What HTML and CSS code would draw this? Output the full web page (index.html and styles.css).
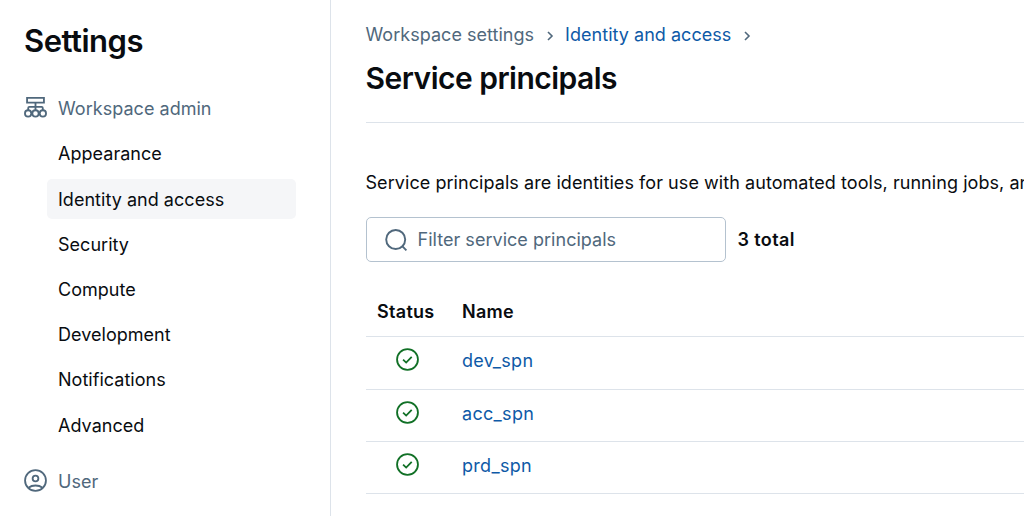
FILE: index.html
```html
<!DOCTYPE html>
<html lang="en">

<head>
    <meta charset="utf-8">
    <meta name="viewport" content="width=device-width">
    <title>Settings</title>
    <link rel="stylesheet" href="styles.css">
</head>

<body>
    <div class="page">
        <aside class="sidebar">
            <h1 class="sidebar-title">Settings</h1>
            <div class="group group-admin">
                <svg class="icon" viewBox="0 0 24 24">
                    <path d="M3.2 2h17.6v5H3.2zM12 7v8M4.4 14.6v-2q0-1.2 1.2-1.2h12.8q1.2 0 1.2 1.2v2" />
                    <circle cx="4.3" cy="18.2" r="3.3" />
                    <circle cx="12" cy="18.2" r="3.3" />
                    <circle cx="19.7" cy="18.2" r="3.3" />
                </svg>
                <span>Workspace admin</span>
            </div>
            <nav class="menu">
                <a class="item">Appearance</a>
                <a class="item on">Identity and access</a>
                <a class="item">Security</a>
                <a class="item">Compute</a>
                <a class="item">Development</a>
                <a class="item">Notifications</a>
                <a class="item">Advanced</a>
            </nav>
            <div class="group group-user">
                <svg class="icon" viewBox="0 0 24 24">
                    <circle cx="12" cy="12" r="10.9" />
                    <circle cx="12" cy="9.9" r="3" />
                    <path d="M4.6 19.6c4.2-3.2 10.6-3.2 14.8 0" />
                </svg>
                <span>User</span>
            </div>
        </aside>
        <main class="main">
            <div class="crumbs">
                <span class="crumb">Workspace settings</span>
                <svg class="chevron" viewBox="0 0 8 12"><path d="M2 2l4 4-4 4" /></svg>
                <a class="crumb link">Identity and access</a>
                <svg class="chevron" viewBox="0 0 8 12"><path d="M2 2l4 4-4 4" /></svg>
            </div>
            <h2 class="title">Service principals</h2>
            <p class="desc">Service principals are identities for use with automated tools, running jobs, and</p>
            <div class="toolbar">
                <div class="search">
                    <svg class="search-icon" viewBox="0 0 24 24">
                        <circle cx="11.7" cy="11.5" r="9.5" />
                        <path d="M18.2 18.2l4.2 4.2" />
                    </svg>
                    <span class="placeholder">Filter service principals</span>
                </div>
                <span class="total">3 total</span>
            </div>
            <div class="table">
                <div class="row head">
                    <span>Status</span>
                    <span>Name</span>
                </div>
                <div class="row">
                    <svg class="check" viewBox="0 0 24 24"><circle cx="12" cy="12" r="10.9" /><path d="M7.4 12.2l3.2 3 5.8-5.9" /></svg>
                    <a class="name link">dev_spn</a>
                </div>
                <div class="row">
                    <svg class="check" viewBox="0 0 24 24"><circle cx="12" cy="12" r="10.9" /><path d="M7.4 12.2l3.2 3 5.8-5.9" /></svg>
                    <a class="name link">acc_spn</a>
                </div>
                <div class="row">
                    <svg class="check" viewBox="0 0 24 24"><circle cx="12" cy="12" r="10.9" /><path d="M7.4 12.2l3.2 3 5.8-5.9" /></svg>
                    <a class="name link">prd_spn</a>
                </div>
            </div>
        </main>
    </div>
</body>

</html>
```
FILE: styles.css
```css
* {
    box-sizing: border-box;
}

body {
    margin: 0;
    background: #fff;
    color: #090c10;
    font-family: Inter, "Liberation Sans", sans-serif;
    font-size: 18px;
    line-height: 26px;
    letter-spacing: 0.03px;
    overflow: hidden;
}

svg {
    display: block;
    flex: none;
    fill: none;
    stroke: currentColor;
    stroke-width: 1.9;
}

.page {
    display: flex;
    height: 516px;
}

.sidebar {
    flex: none;
    width: 331px;
    padding: 21px 34px 0 23px;
    border-right: 1px solid #dde3ea;
}

.sidebar-title {
    margin: 0 0 0 1px;
    font-size: 31px;
    font-weight: 600;
    line-height: 40px;
    letter-spacing: -0.5px;
}

.group {
    display: flex;
    align-items: center;
    gap: 11px;
    height: 26px;
    padding-left: 1px;
    color: #50687c;
}

.group-admin {
    margin-top: 35px;
}

.group-user {
    margin-top: 24px;
}

.icon {
    width: 23px;
    height: 23px;
    margin-bottom: 4px;
}

.menu {
    display: flex;
    flex-direction: column;
    gap: 5.8px;
    margin: 12px 0 0 24px;
}

.item {
    height: 39.5px;
    padding-left: 11px;
    border-radius: 5px;
    line-height: 40px;
}

.item.on {
    background: #f5f6f8;
    line-height: 41px;
}

.main {
    flex: none;
    width: 693px;
    padding: 22px 0 0 34.5px;
    overflow: hidden;
}

.crumbs {
    display: flex;
    align-items: center;
    color: #50687c;
}

.chevron {
    width: 8px;
    height: 12px;
    margin: 2px 11px 0 12px;
    stroke-width: 1.6;
}

.link {
    color: #0e5aa7;
}

.title {
    margin: 0;
    padding: 10px 0 24px;
    border-bottom: 1px solid #dde3ea;
    font-size: 30px;
    font-weight: 600;
    line-height: 40px;
    letter-spacing: -0.52px;
}

.desc {
    margin: 47px 0 21px;
    letter-spacing: 0.06px;
    white-space: nowrap;
}

.toolbar {
    display: flex;
    align-items: center;
    gap: 12px;
}

.search {
    display: flex;
    align-items: center;
    gap: 10px;
    width: 360px;
    height: 45px;
    padding-left: 17px;
    border: 1px solid #b4c2cf;
    border-radius: 5px;
    color: #50687c;
}

.search-icon {
    width: 24px;
    height: 24px;
}

.placeholder {
    padding-top: 1px;
}

.total {
    padding-top: 1px;
    font-weight: 600;
    letter-spacing: 0.4px;
}

.table {
    margin-top: 23px;
}

.row {
    display: grid;
    grid-template-columns: 85px 1fr;
    align-items: center;
    height: 52.3px;
    padding-left: 11.5px;
    border-bottom: 1px solid #dde3ea;
}

.head {
    padding-top: 2px;
    font-weight: 600;
    letter-spacing: 0.3px;
}

.name {
    padding-bottom: 3px;
    letter-spacing: 0.3px;
}

.check {
    width: 23px;
    height: 23px;
    margin: 0 0 6px 19px;
    color: #117026;
}
```
